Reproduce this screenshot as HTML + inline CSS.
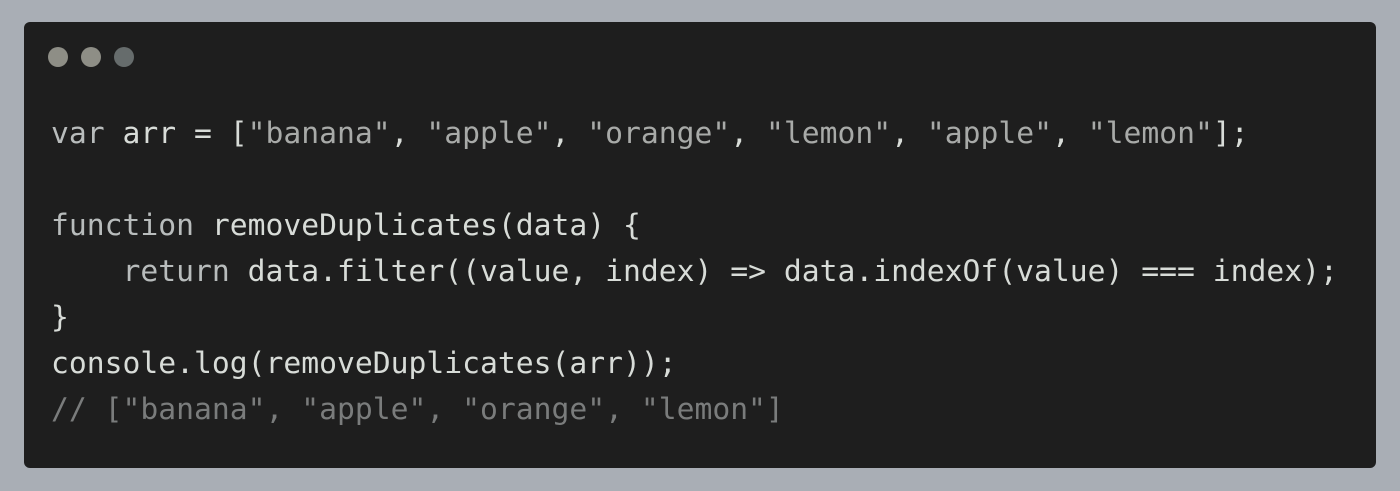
<!DOCTYPE html>
<html><head><style>
body{margin:0;width:1400px;height:491px;background:#a9aeb5;overflow:hidden}
.card{position:absolute;left:24px;top:22px;width:1352px;height:446px;background:#1e1e1e;border-radius:6px}
.dot{position:absolute;top:25px;width:20px;height:20px;border-radius:50%}
pre{position:absolute;left:27px;top:89px;margin:0;font-family:"DejaVu Sans Mono","Liberation Mono",monospace;font-size:29.7px;line-height:46px;color:#d8dcd8}
.k{color:#b8bcbc}.s{color:#a8aaa8}.c{color:#7a7c7c}
</style></head><body>
<div class="card">
<div class="dot" style="left:24px;background:#8e8e86"></div>
<div class="dot" style="left:57px;background:#8e8e86"></div>
<div class="dot" style="left:90px;background:#666c6c"></div>
<pre><span class="k">var</span> arr = [<span class="s">"banana"</span>, <span class="s">"apple"</span>, <span class="s">"orange"</span>, <span class="s">"lemon"</span>, <span class="s">"apple"</span>, <span class="s">"lemon"</span>];

<span class="k">function</span> removeDuplicates(data) {
    <span class="k">return</span> data.filter((value, index) =&gt; data.indexOf(value) === index);
}
console.log(removeDuplicates(arr));
<span class="c">// ["banana", "apple", "orange", "lemon"]</span></pre>
</div>
</body></html>
